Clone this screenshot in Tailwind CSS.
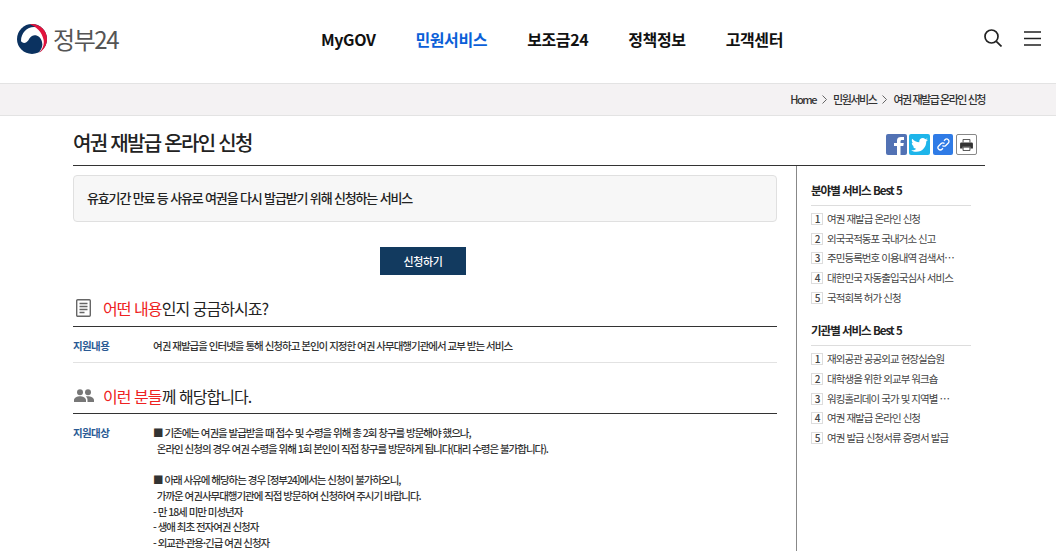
<!DOCTYPE html>
<html lang="ko">
<head>
    <meta charset="UTF-8">
    <title>여권 재발급 온라인 신청</title>
    <script src="https://cdn.jsdelivr.net/npm/@tailwindcss/browser@4"></script>
</head>
<body class="h-[551px] overflow-hidden bg-white font-['Noto_Sans_CJK_KR','Noto_Sans',sans-serif] text-[#222]">
    <!-- Header -->
    <header class="relative flex h-[84px] justify-between border-b border-[#e3e3e3] pl-[17px] pr-[15px]">
        <div class="flex h-[77px] items-center">
            <svg width="30" height="30" viewBox="0 0 30 30">
                <circle cx="15" cy="15" r="15" fill="#0b3260"/>
                <path d="M4 17C4 9 10 3 17 3C24 3 29 9 29 15C29 20 27 25 22 28C25 25 26 21 25 18C24 13 19 10 15 12C12 13.500 12 17 9 18.500C7 19.500 4.500 18.500 4 17z" fill="#fff"/>
                <path d="M13 .2C22-.8 30 6 30 15C30 21 27 26 22 28.800C26 25 27.500 20 26.500 15.500C25 8.500 20 3 13 .2z" fill="#e2143c"/>
            </svg>
            <span class="ml-[6px] text-[24px] leading-none tracking-[-1.4px] text-[#555]">정부24</span>
        </div>
        <nav class="absolute left-[321px] top-[29px] flex gap-[40px] text-[16px] font-bold leading-[20px] tracking-[-0.38px] text-[#111]">
            <a href="#">MyGOV</a>
            <a href="#" class="text-[#0b5fd8]">민원서비스</a>
            <a href="#">보조금24</a>
            <a href="#">정책정보</a>
            <a href="#">고객센터</a>
        </nav>
        <div class="flex h-[76px] items-center gap-[22px]">
            <svg width="18" height="18" viewBox="0 0 18 18" fill="none" stroke="#222" stroke-width="1.700">
                <circle cx="7.500" cy="7.500" r="6.500"/><path d="M12.300 12.300 17.500 17.500"/>
            </svg>
            <svg width="17" height="15" viewBox="0 0 17 15" stroke="#222" stroke-width="1.500"><path d="M0 1h17M0 7.500h17M0 14h17"/></svg>
        </div>
    </header>

    <!-- Breadcrumb -->
    <div class="flex h-[32px] items-center justify-end border-b border-[#e3e3e3] bg-[#f4f2f3] pr-[71px] text-[11px] font-medium tracking-[-1.45px] text-[#333]">
        <span>Home</span>
        <svg class="mx-[6px]" width="5" height="9" viewBox="0 0 5 9" fill="none" stroke="#666"><path d="M.5.500l4 4-4 4"/></svg>
        <span>민원서비스</span>
        <svg class="mx-[6px]" width="5" height="9" viewBox="0 0 5 9" fill="none" stroke="#666"><path d="M.5.500l4 4-4 4"/></svg>
        <span>여권 재발급 온라인 신청</span>
    </div>

    <div class="ml-[73px] w-[912px]">
        <!-- Title -->
        <div class="flex h-[50px] items-center justify-between border-b border-[#333]">
            <h1 class="pt-[5px] text-[20px] font-medium leading-[26px] tracking-[-1.7px] text-[#222]">여권 재발급 온라인 신청</h1>
            <div class="mr-[8px] mt-[8px] flex items-center gap-[2px]">
                <span class="flex h-[21px] w-[21px] items-end justify-end overflow-hidden rounded-[2px] bg-[#5272b4]">
                    <svg width="15" height="19" viewBox="0 0 15 19"><path d="M5 19v-9H2V7h3V4.500C5 2 6.500 1 9 1h3v3h-2C9 4 8.500 4.500 8.500 5.500V7h3.300l-.5 3H8.500v9z" fill="#fff"/></svg>
                </span>
                <span class="flex h-[21px] w-[21px] items-center justify-center rounded-[2px] bg-[#1eb5ea]">
                    <svg width="17" height="14" viewBox="0 0 24 20"><path d="M24 2.400c-.9.400-1.800.700-2.800.800 1-.6 1.800-1.600 2.200-2.700-1 .6-2 1-3.100 1.200C19.300.7 18 0 16.600 0c-2.700 0-4.900 2.200-4.900 4.900 0 .4 0 .8.100 1.100C7.700 5.800 4.100 3.800 1.700.9 1.200 1.600 1 2.500 1 3.400c0 1.700.9 3.200 2.200 4.100-.8 0-1.600-.2-2.200-.6v.1c0 2.400 1.700 4.400 3.900 4.800-.7.200-1.500.2-2.200.1.600 2 2.400 3.400 4.600 3.400C5.600 16.900 3 17.800.1 17.500 2.300 18.900 4.800 19.700 7.600 19.700c9 0 14-7.500 14-14v-.6c1-.7 1.800-1.600 2.400-2.700z" fill="#fff"/></svg>
                </span>
                <span class="ml-[1px] flex h-[21px] w-[20px] items-center justify-center rounded-[2px] bg-[#2f7be6]">
                    <svg width="13" height="13" viewBox="0 0 13 13" fill="none" stroke="#fff" stroke-width="1.300"><path d="M5.500 7.500a2.300 2.300 0 0 0 3.300 0l2.500-2.500a2.300 2.300 0 0 0-3.300-3.300L7 2.700"/><path d="M7.500 5.500a2.300 2.300 0 0 0-3.300 0L1.700 8a2.300 2.300 0 0 0 3.300 3.300L6 10.300"/></svg>
                </span>
                <span class="ml-[1px] flex h-[21px] w-[21px] items-center justify-center rounded-[2px] border border-[#888] bg-white">
                    <svg width="13" height="12" viewBox="0 0 15 14"><path d="M3.500 4V.5h8V4" fill="none" stroke="#333"/><path d="M1.500 4h12a1.500 1.500 0 0 1 1.500 1.500V11h-3V9H3v2H0V5.500A1.500 1.500 0 0 1 1.500 4z" fill="#333"/><path d="M3.500 9.500h8v4h-8z" fill="none" stroke="#333"/></svg>
                </span>
            </div>
        </div>

        <div class="flex">
            <!-- Main -->
            <main class="h-[386px] w-[724px] overflow-hidden border-r border-[#888] pr-[19px]">
                <div class="mt-[9px] flex h-[47px] items-center rounded-[4px] border border-[#e0e0e0] bg-[#f7f7f7] pb-[1px] pl-[13px] text-[13px] font-medium tracking-[-1.15px] text-[#222]">
                    유효기간 만료 등 사유로 여권을 다시 발급받기 위해 신청하는 서비스
                </div>
                <div class="mt-[25px] flex justify-center pr-[4px]">
                    <a href="#" class="flex h-[28px] w-[86px] items-center justify-center bg-[#123a5f] text-[11px] font-medium tracking-[-0.4px] text-white">신청하기</a>
                </div>

                <div class="mt-[13px] flex h-[39px] items-center border-b border-[#333] pt-[2px]">
                    <svg class="ml-[3px]" width="15" height="18" viewBox="0 0 15 18" fill="none" stroke="#666" stroke-width="1.400">
                        <rect x=".7" y=".7" width="13.600" height="16.600" rx="1"/><path d="M3.500 4.500h8M3.500 7.500h8M3.500 10.500h8M3.500 13.500h5"/>
                    </svg>
                    <h2 class="ml-[12px] text-[16px] leading-[22px] tracking-[-0.95px] text-[#222]"><span class="text-[#ee2222]">어떤 내용</span>인지 궁금하시죠?</h2>
                </div>
                <div class="flex h-[36px] items-center border-b border-[#e2e2e2] pt-[2px] text-[10.500px]">
                    <span class="w-[80px] font-bold tracking-[-0.6px] text-[#2a5a94]">지원내용</span>
                    <span class="font-medium tracking-[-1px] text-[#333]">여권 재발급을 인터넷을 통해 신청하고 본인이 지정한 여권 사무대행기관에서 교부 받는 서비스</span>
                </div>

                <div class="mt-[13px] flex h-[38px] items-center border-b border-[#333] pt-[2px]">
                    <svg width="20" height="13" viewBox="0 0 20 13" class="ml-[1px]" fill="#777">
                        <circle cx="6" cy="3.200" r="3"/><circle cx="14" cy="3.200" r="3"/><path d="M0 13v-2c0-2.500 3.500-3.800 6-3.800s6 1.300 6 3.800v2zM13.500 13v-2c0-1.500-.5-2.700-1.700-3.500.7-.2 1.500-.3 2.200-.3 2.500 0 6 1.300 6 3.800v2z"/>
                    </svg>
                    <h2 class="ml-[9px] text-[16px] leading-[22px] tracking-[-0.95px] text-[#222]"><span class="text-[#ee2222]">이런 분들</span>께 해당합니다.</h2>
                </div>
                <div class="flex pt-[11px] text-[10.500px] leading-[15.700px]">
                    <span class="w-[80px] shrink-0 font-bold tracking-[-0.6px] text-[#2a5a94]">지원대상</span>
                    <p class="font-medium tracking-[-1.03px] text-[#333]">
                        ■ 기존에는 여권을 발급받을 때 접수 및 수령을 위해 총 2회 창구를 방문해야 했으나,<br>
                        &nbsp;&nbsp;온라인 신청의 경우 여권 수령을 위해 1회 본인이 직접 창구를 방문하게 됩니다(대리 수령은 불가합니다).<br>
                        <br>
                        ■ 아래 사유에 해당하는 경우 [정부24]에서는 신청이 불가하오니,<br>
                        &nbsp;&nbsp;가까운 여권사무대행기관에 직접 방문하여 신청하여 주시기 바랍니다.<br>
                        - 만 18세 미만 미성년자<br>
                        - 생애 최초 전자여권 신청자<br>
                        - 외교관·관용·긴급 여권 신청자
                    </p>
                </div>
            </main>

            <!-- Sidebar -->
            <aside class="w-[188px] px-[14px] pt-[15px] text-[10.500px] tracking-[-0.95px] text-[#444]">
                <h3 class="border-b border-[#ddd] pb-[6px] text-[11.500px] font-bold leading-[18px] tracking-[-1px] text-[#222]">분야별 서비스 Best 5</h3>
                <ol class="mt-[3px] whitespace-nowrap">
                    <li class="flex h-[19.700px] items-center"><span class="mr-[4px] flex h-[12px] w-[12px] items-center justify-center border border-[#ddd] text-[10px] font-medium leading-none">1</span>여권 재발급 온라인 신청</li>
                    <li class="flex h-[19.700px] items-center"><span class="mr-[4px] flex h-[12px] w-[12px] items-center justify-center border border-[#ddd] text-[10px] font-medium leading-none">2</span>외국국적동포 국내거소 신고</li>
                    <li class="flex h-[19.700px] items-center"><span class="mr-[4px] flex h-[12px] w-[12px] items-center justify-center border border-[#ddd] text-[10px] font-medium leading-none">3</span>주민등록번호 이용내역 검색서…</li>
                    <li class="flex h-[19.700px] items-center"><span class="mr-[4px] flex h-[12px] w-[12px] items-center justify-center border border-[#ddd] text-[10px] font-medium leading-none">4</span>대한민국 자동출입국심사 서비스</li>
                    <li class="flex h-[19.700px] items-center"><span class="mr-[4px] flex h-[12px] w-[12px] items-center justify-center border border-[#ddd] text-[10px] font-medium leading-none">5</span>국적회복 허가 신청</li>
                </ol>
                <h3 class="mt-[14px] border-b border-[#ddd] pb-[6px] text-[11.500px] font-bold leading-[18px] tracking-[-1px] text-[#222]">기관별 서비스 Best 5</h3>
                <ol class="mt-[3px] whitespace-nowrap">
                    <li class="flex h-[19.700px] items-center"><span class="mr-[4px] flex h-[12px] w-[12px] items-center justify-center border border-[#ddd] text-[10px] font-medium leading-none">1</span>재외공관 공공외교 현장실습원</li>
                    <li class="flex h-[19.700px] items-center"><span class="mr-[4px] flex h-[12px] w-[12px] items-center justify-center border border-[#ddd] text-[10px] font-medium leading-none">2</span>대학생을 위한 외교부 워크숍</li>
                    <li class="flex h-[19.700px] items-center"><span class="mr-[4px] flex h-[12px] w-[12px] items-center justify-center border border-[#ddd] text-[10px] font-medium leading-none">3</span>워킹홀리데이 국가 및 지역별 …</li>
                    <li class="flex h-[19.700px] items-center"><span class="mr-[4px] flex h-[12px] w-[12px] items-center justify-center border border-[#ddd] text-[10px] font-medium leading-none">4</span>여권 재발급 온라인 신청</li>
                    <li class="flex h-[19.700px] items-center"><span class="mr-[4px] flex h-[12px] w-[12px] items-center justify-center border border-[#ddd] text-[10px] font-medium leading-none">5</span>여권 발급 신청서류 증명서 발급</li>
                </ol>
            </aside>
        </div>
    </div>
</body>
</html>
